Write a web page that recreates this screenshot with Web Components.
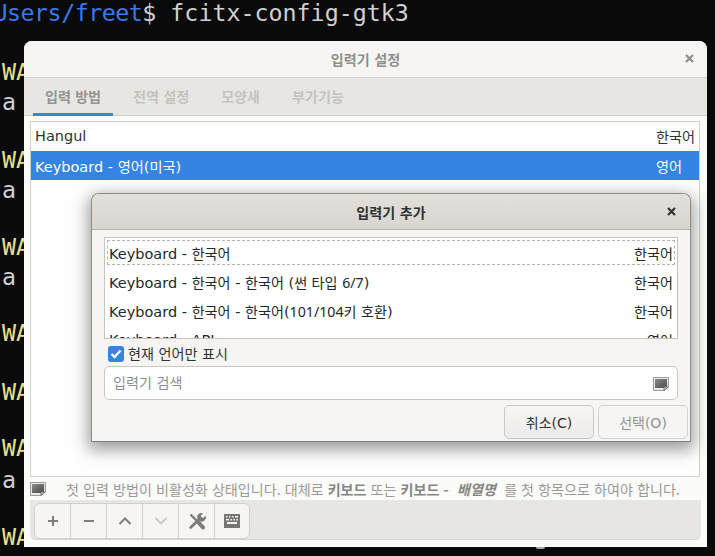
<!DOCTYPE html>
<html><head><meta charset="utf-8">
<style>
html,body{margin:0;padding:0;width:715px;height:556px;overflow:hidden;background:#0a0a0a}
body{position:relative;font-family:"DejaVu Sans","Noto Sans CJK KR",sans-serif}
</style></head><body>
<term-bg></term-bg>
<config-window>
  <tab-bar slot="tabs"></tab-bar>
  <im-list slot="list"></im-list>
  <status-line slot="status"></status-line>
  <tool-bar slot="toolbar"></tool-bar>
</config-window>
<add-dialog></add-dialog>
<script>
function def(name,html){customElements.define(name,class extends HTMLElement{constructor(){super();this.attachShadow({mode:'open'}).innerHTML=html}})}
const note=`<svg width="16" height="15" viewBox="0 0 16 15"><defs><linearGradient id="n" x1="0" y1="0" x2="1" y2="1"><stop offset="0" stop-color="#8b8b88"/><stop offset="1" stop-color="#4a4a48"/></linearGradient></defs><path d="M.5 1.5h15v9l-4 4H.5z" fill="#e9e9e6" stroke="#9a9a97"/><rect x="2" y="3" width="12" height="9" fill="url(#n)"/><path d="M11 14.5v-3.500h4.500z" fill="#cfcfcc" stroke="#777"/></svg>`;
def('term-bg',`<style>
:host{position:absolute;inset:0;display:block;font:23.3px/1 "DejaVu Sans Mono","Liberation Mono",monospace;color:#d0d0d0;overflow:hidden}
.p{position:absolute;left:-6.500px;top:-1px;white-space:pre;line-height:27px}
.b{color:#3b78ee;letter-spacing:-.5px}
.y,.a{position:absolute;white-space:pre;line-height:26px}
.y{color:#e8e08c;left:-12px}
.a{left:-12px}
.bit{position:absolute;left:536px;top:547px;width:9px;height:2px;background:#a9a9a9;border-radius:0 0 3px 3px}
</style>
<div class="p"><span class="b">Users/freet</span>$ fcitx-config-gtk3</div>
<div class="y" style="top:59px">-WA</div><div class="a" style="top:89px">la</div>
<div class="y" style="top:147px">-WA</div><div class="a" style="top:177px">la</div>
<div class="y" style="top:234px">-WA</div><div class="a" style="top:264px">la</div>
<div class="y" style="top:320px">-WA</div>
<div class="y" style="top:379px">-WA</div>
<div class="y" style="top:435px">-WA</div><div class="a" style="top:467px">la</div>
<div class="y" style="top:524px">-WA</div>
<div class="bit"></div>`);
def('config-window',`<style>
:host{position:absolute;left:24px;top:41px;width:683px;height:506px;display:flex;flex-direction:column;background:#fbfbfa;border-radius:8px 8px 0 0;box-sizing:border-box;border-bottom:1px solid #fff}
header{height:36px;flex:none;background:#f6f5f4;border-radius:8px 8px 0 0;border-bottom:1px solid #d6d0ca;display:flex;align-items:center;justify-content:center;position:relative;font:700 14.100px "Noto Sans CJK KR",sans-serif;word-spacing:1.500px;color:#8f8f8c}
.x{position:absolute;right:12px;top:12px;width:11px;height:11px}
.body{flex:1;display:flex;flex-direction:column;min-height:0}
</style>
<header>입력기 설정<svg class="x" viewBox="0 0 11 11"><path d="M2 2l7 7M9 2l-7 7" stroke="#8e8e8c" stroke-width="2.200"/></svg></header>
<div class="body"><slot name="tabs"></slot><slot name="list"></slot><slot name="status"></slot><slot name="toolbar"></slot></div>`);
def('tab-bar',`<style>
:host{display:flex;gap:8px;height:38px;box-sizing:border-box;background:#e8e6e3;border-bottom:1px solid #d3d0cb;padding-left:9px;font:700 14.100px "Noto Sans CJK KR",sans-serif;word-spacing:1px;color:#c4c3c0;flex:none}
span{display:flex;align-items:center;height:37px;box-sizing:border-box;padding:0 12px 2px;white-space:nowrap}
.on{color:#949491;border-bottom:3px solid #3584e4;height:38px;padding-bottom:0}
</style><span class="on">입력 방법</span><span>전역 설정</span><span>모양새</span><span>부가기능</span>`);
def('im-list',`<style>
:host{display:block;flex:1;min-height:0;margin:5px 7px 0 6px;border:1px solid #d5cfc9;background:#fefefe;font:14.500px "DejaVu Sans","Noto Sans CJK KR",sans-serif;color:#2e3436}
.r{height:29px;box-sizing:border-box;display:flex;align-items:center;justify-content:space-between;padding:0 0 1px 4px;white-space:nowrap}
.s{background:#3584e4;color:#fff;padding-bottom:0}
b{font-weight:400;width:43px;flex:none;font-size:14.200px}
k{font-size:14.200px}
</style><div class="r"><span>Hangul</span><b>한국어</b></div><div class="r s"><span>Keyboard - <k>영어</k>(<k>미국</k>)</span><b>영어</b></div>`);
def('status-line',`<style>
:host{display:flex;align-items:center;height:23px;flex:none;margin-left:6px;font:14.100px "Noto Sans CJK KR",sans-serif;word-spacing:.9px;color:#9a9a97;white-space:pre}
svg{flex:none;margin-right:20px}
b{color:#868683}
i{color:#868683;font-weight:700}
</style>${note}첫 입력 방법이 비활성화 상태입니다. 대체로 <b>키보드</b> 또는 <b>키보드 -  </b><i>배열명</i>  를 첫 항목으로 하여야 합니다.`);
def('tool-bar',`<style>
:host{display:flex;flex:none;height:40px;box-sizing:border-box;margin:0 6px 6px;padding:3px 0 0 4px;background:#e8e6e3;border-bottom:1px solid #d8d4cf;border-radius:0 0 6px 6px}
.g{display:flex;height:34px;border:1px solid #d3d0cb;border-radius:6px;background:#f6f5f4;overflow:hidden}
.g div{box-sizing:border-box;width:36px;height:100%;display:flex;align-items:center;justify-content:center;border-left:1px solid #d3d0cb}
.g div:first-child{border-left:0;width:35px}
.g div:last-child{width:35px}
</style><div class="g">
<div><svg width="12" height="12" viewBox="0 0 12 12"><path d="M6 1v10M1 6h10" stroke="#807f7d" stroke-width="2"/></svg></div>
<div><svg width="12" height="12" viewBox="0 0 12 12"><path d="M1 6h10" stroke="#807f7d" stroke-width="2"/></svg></div>
<div><svg width="14" height="10" viewBox="0 0 14 10"><path d="M1.500 8L7 2.500 12.500 8" fill="none" stroke="#807f7d" stroke-width="2"/></svg></div>
<div><svg width="14" height="10" viewBox="0 0 14 10"><path d="M1.500 2L7 7.500 12.500 2" fill="none" stroke="#c8c7c4" stroke-width="1.800"/></svg></div>
<div><svg width="18" height="17" viewBox="0 0 18 17" fill="none"><path d="M2.500 1.500L9 8" stroke="#7b7a78" stroke-width="2.400"/><path d="M11 10l4 4.500" stroke="#7b7a78" stroke-width="4" stroke-linecap="round"/><path d="M12.500 5L2.700 14.500" stroke="#7b7a78" stroke-width="2.600" stroke-linecap="round"/><path d="M15 .5l-2.200 2.200.5 1.700 1.700.5L17.300 2.700A4 4 0 0 1 11 7.500L9.700 6A4 4 0 0 1 15 .5z" fill="#7b7a78"/></svg></div>
<div><svg width="16" height="14" viewBox="0 0 16 14"><path fill-rule="evenodd" d="M0 0h16v14H0zM2 2v1.500h1.500V2zm3 0v1.500h1.500V2zm3 0v1.500h1.500V2zm3 0v1.500h3V2zM2 5v1.500h3V5zm4.500 0v1.500H8V5zm3 0v1.500H11V5zm3 0v1.500H14V5zM3 8v2h10V8z" fill="#777674"/></svg></div>
</div>`);
def('add-dialog',`<style>
:host{position:absolute;left:91px;top:193px;width:600px;height:249px;box-sizing:border-box;display:flex;flex-direction:column;background:#f6f5f4;border:1px solid #8d8c89;border-bottom-color:#7d7c79;border-radius:8px 8px 0 0;box-shadow:0 5px 16px 3px rgba(0,0,0,.38);color:#2e3436}
header{height:35px;flex:none;border-radius:7px 7px 0 0;background:linear-gradient(#e3e0dc,#d8d4cf);border-bottom:1px solid #b9b5b0;display:flex;align-items:center;justify-content:center;position:relative;font:700 14.100px "Noto Sans CJK KR",sans-serif;word-spacing:1.500px;color:#2e3436}
.x{position:absolute;right:13px;top:12px;width:11px;height:11px}
.list{height:102px;flex:none;margin:7px 12px 0;border:1px solid #c9c4be;background:#fff;overflow:hidden;padding-top:2px;box-sizing:border-box;font:14.500px "DejaVu Sans","Noto Sans CJK KR",sans-serif;color:#22282a}
.r{height:29px;box-sizing:border-box;display:flex;justify-content:space-between;align-items:center;padding:0 2px;margin:0 2px;white-space:nowrap}
.f{height:25px;margin:0 2px 2px;outline:1px dashed #b5b5b3;outline-offset:-1px}
k{font-size:14.100px}
u{text-decoration:none;font:14.200px "Noto Sans",sans-serif}
.chk{display:flex;align-items:center;gap:4px;height:23px;margin:3px 0 0 16px;padding-bottom:1px;box-sizing:border-box;font:14.100px "Noto Sans CJK KR",sans-serif;word-spacing:1.400px;color:#2e3436;flex:none}
.box{width:16px;height:16px;border-radius:3px;background:#3584e4;display:flex;align-items:center;justify-content:center;position:relative;top:1px}
.entry{height:34px;box-sizing:border-box;margin:1px 12px 0;border:1px solid #cdc7c2;border-radius:5px;background:#fff;display:flex;align-items:center;justify-content:space-between;padding:0 8px;font:14.100px "Noto Sans CJK KR",sans-serif;word-spacing:1.400px;color:#8f908d;flex:none}
.entry span{position:relative;top:-1px}
.btns{display:flex;justify-content:flex-end;gap:4px;margin:5px 2px 0 0}
.btn{width:90px;height:34px;box-sizing:border-box;border:1px solid #cdc7c2;border-radius:5px;display:flex;align-items:center;justify-content:center;font:14px "DejaVu Sans","Noto Sans CJK KR",sans-serif;background:linear-gradient(#f7f6f5,#edebe9);color:#2e3436}
.d{background:#f6f5f4;color:#929390;border-color:#d5d0cb}
</style>
<header>입력기 추가<svg class="x" viewBox="0 0 11 11"><path d="M2 2l7 7M9 2l-7 7" stroke="#2e3436" stroke-width="2.200"/></svg></header>
<div class="list">
<div class="r f"><span>Keyboard - <k>한국어</k></span><span><k>한국어</k></span></div>
<div class="r"><span>Keyboard - <k>한국어</k> - <k>한국어</k> (<k>썬 타입</k> <u>6/7</u>)</span><span><k>한국어</k></span></div>
<div class="r"><span>Keyboard - <k>한국어</k> - <k>한국어</k>(<u>101/104</u><k>키 호환</k>)</span><span><k>한국어</k></span></div>
<div class="r"><span>Keyboard - API</span><span><k>영어</k></span></div>
</div>
<div class="chk"><span class="box"><svg width="12" height="10" viewBox="0 0 12 10"><path d="M1.500 5l3 3 6-6.500" fill="none" stroke="#fff" stroke-width="2.400"/></svg></span>현재 언어만 표시</div>
<div class="entry"><span>입력기 검색</span>${note}</div>
<div class="btns"><div class="btn">취소(C)</div><div class="btn d">선택(O)</div></div>`);
</script>
</body></html>
